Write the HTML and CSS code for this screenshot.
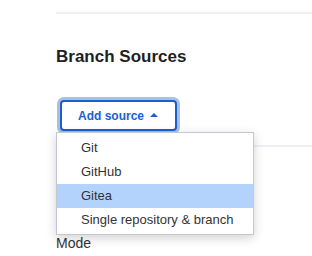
FILE: index.html
```html
<!DOCTYPE html>
<html lang="en">
<head>
    <meta charset="UTF-8">
    <meta name="viewport" content="width=device-width, initial-scale=1.0">
    <title>Branch Sources</title>
    <link rel="stylesheet" href="styles.css">
</head>
<body>
    <div class="page">
        <div class="rule"></div>
        <h2>Branch Sources</h2>
        <div class="add">
            <button class="btn">Add source
                <svg class="caret" width="8" height="4" viewBox="0 0 8 4"><polygon points="0,4 4,0 8,4" fill="currentColor"/></svg>
            </button>
            <ul class="menu">
                <li>Git</li>
                <li>GitHub</li>
                <li class="active">Gitea</li>
                <li>Single repository &amp; branch</li>
            </ul>
        </div>
        <div class="section">
            <label class="label">Mode</label>
        </div>
    </div>
</body>
</html>
```

FILE: styles.css
```css
body { margin: 0; padding: 0; background: #fff; font-family: "Liberation Sans", Arial, sans-serif; color: #333; }
.page { padding: 12px 0 0 56px; }
.rule { height: 2px; background: #f0f0f4; }
h2 { margin: 33px 0 0; font-size: 17px; line-height: 20px; font-weight: bold; color: #1f1f23; }
.add { position: relative; margin-top: 33px; }
.btn { display: flex; align-items: center; gap: 6px; height: 31px; margin-left: 4px; padding: 0 17px 0 16px; background: #fff; border: 2px solid #1a5fd1; border-radius: 4px; box-shadow: 0 0 0 3px #a9c1de; color: #1a5fd1; font-family: "Liberation Sans", Arial, sans-serif; font-size: 12px; font-weight: bold; }
.caret { display: block; margin-top: -1px; }
.menu { position: absolute; top: 32px; left: 0; width: 196px; margin: 0; padding: 3px 0 2px; list-style: none; background: #fff; border: 1px solid #c3c7ce; box-shadow: 0 3px 10px rgba(0, 0, 0, 0.18); z-index: 2; }
.menu li { height: 24px; line-height: 24px; padding-left: 24px; font-size: 13px; color: #333; }
.menu li.active { background: #b3d3fd; }
.section { margin-top: 14px; border-top: 2px solid #f0f0f4; padding-top: 88px; }
.label { display: block; font-size: 14px; line-height: 17px; color: #333; }
```
